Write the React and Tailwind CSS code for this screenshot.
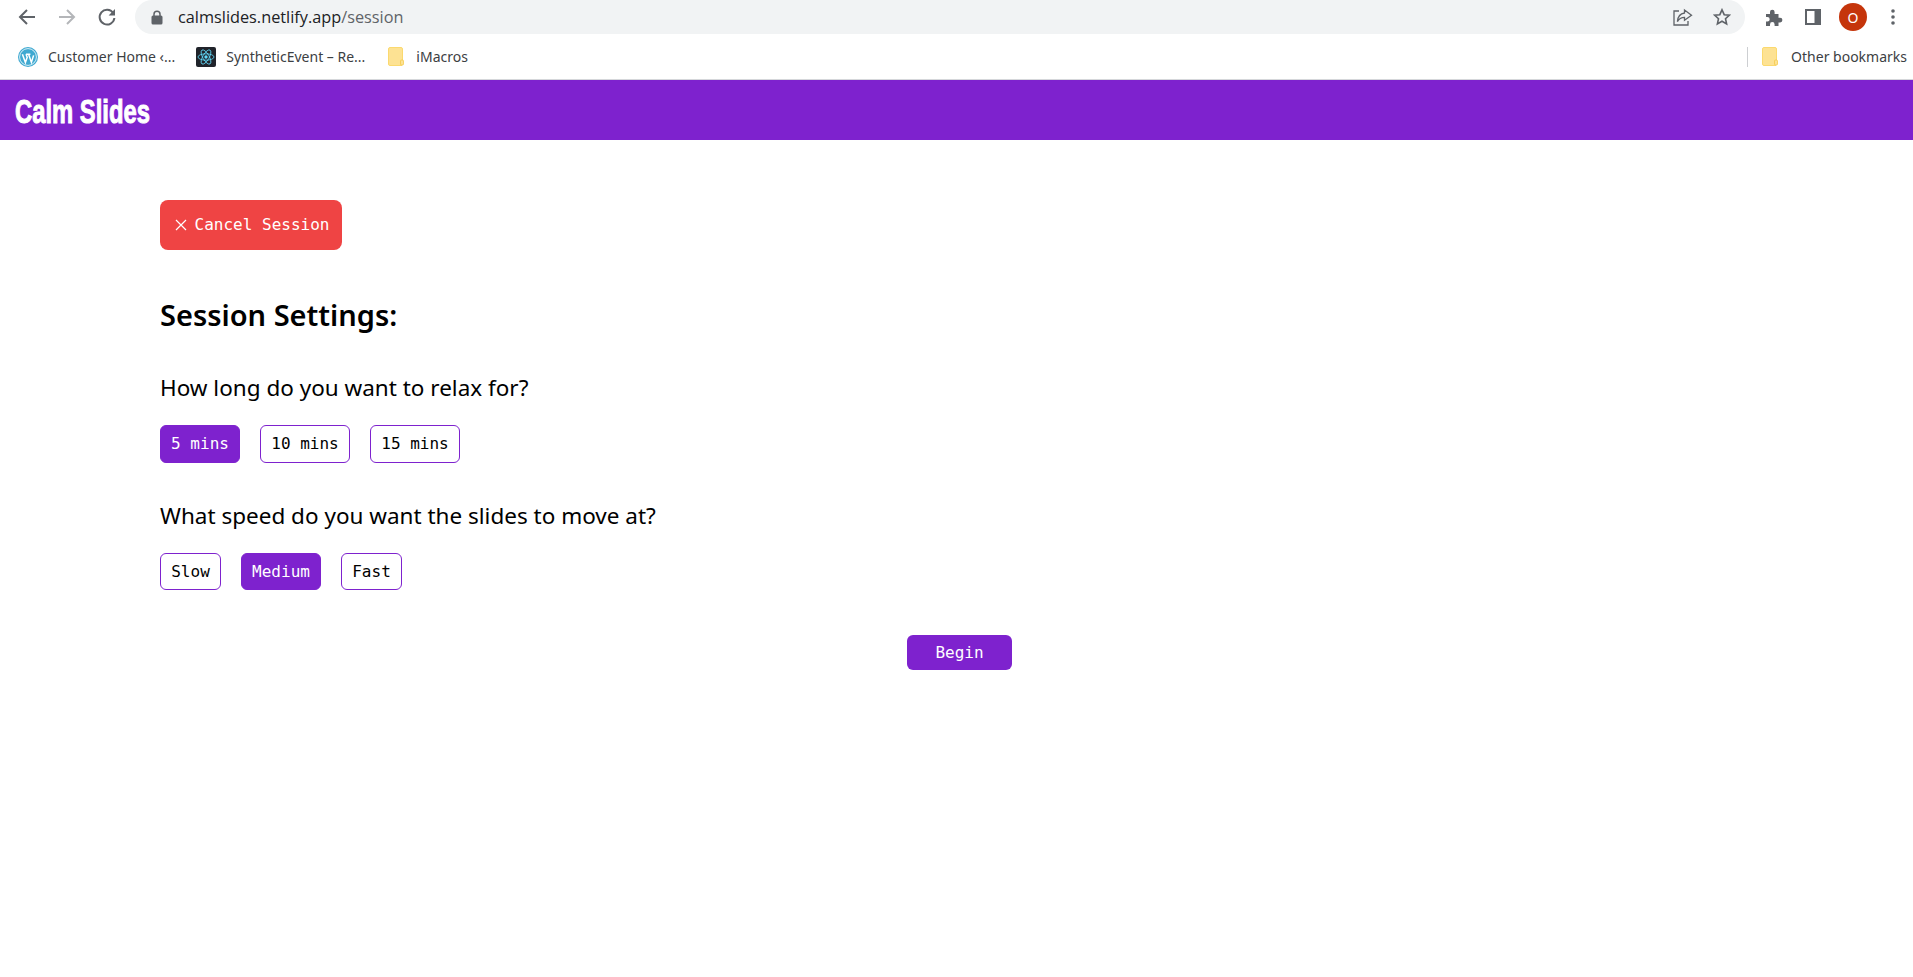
import { useState } from 'react';

const mono = "font-['DejaVu_Sans_Mono','Liberation_Mono',monospace]";

const Back = () => (
    <svg width="20" height="20" viewBox="0 0 20 20" fill="none" stroke="#5f6368" strokeWidth="2">
        <path d="M18 10H3M10 3l-7 7 7 7" />
    </svg>
);

const Forward = () => (
    <svg width="20" height="20" viewBox="0 0 20 20" fill="none" stroke="#b4b6b9" strokeWidth="2">
        <path d="M2 10h15M10 3l7 7-7 7" />
    </svg>
);

const Reload = () => (
    <svg width="20" height="20" viewBox="0 0 20 20" fill="none">
        <path d="M16.2 6A7.4 7.4 0 1 0 17.4 11" stroke="#5f6368" strokeWidth="2" />
        <path d="M18 2v6.4h-6.4z" fill="#5f6368" />
    </svg>
);

const Lock = () => (
    <svg width="12" height="15" viewBox="0 0 12 15">
        <path d="M3 6V4.2a3 3 0 0 1 6 0V6" fill="none" stroke="#5f6368" strokeWidth="1.5" />
        <rect x="0.5" y="5.5" width="11" height="9" rx="1.5" fill="#5f6368" />
    </svg>
);

const Share = () => (
    <svg width="20" height="18" viewBox="0 0 20 18" fill="none" stroke="#5f6368" strokeWidth="1.3">
        <path d="M6 3H1v14h14v-4" />
        <path d="M11.5 2l7 5.2-7 5V9.4C8 9.4 6 10.6 4.4 13.6 4.8 9 7 5.6 11.5 5z" />
    </svg>
);

const Star = () => (
    <svg width="18" height="18" viewBox="0 0 18 18" fill="none" stroke="#5f6368" strokeWidth="1.6">
        <path d="M9 1.8l2.2 4.9 5.2.5-3.9 3.5 1.1 5.2L9 13.2l-4.6 2.7 1.1-5.2L1.6 7.2l5.2-.5z" />
    </svg>
);

const Puzzle = () => (
    <svg width="18" height="18" viewBox="0 0 18 18" fill="#5f6368">
        <path d="M1 6h4V4a2.3 2.3 0 0 1 4.6 0v2h3.9v3.8h1.6a2.3 2.3 0 0 1 0 4.6h-1.6V18H9.6v-1.6a2.3 2.3 0 0 0-4.6 0V18H1v-4.4h1.4a2.3 2.3 0 0 0 0-4.6H1z" />
    </svg>
);

const Panel = () => (
    <svg width="18" height="18" viewBox="0 0 18 18">
        <rect x="1" y="1" width="16" height="16" fill="#5f6368" />
        <rect x="3" y="3" width="7.5" height="12" fill="#fff" />
    </svg>
);

const Dots = () => (
    <svg width="4" height="16" viewBox="0 0 4 16" fill="#5f6368">
        <circle cx="2" cy="2" r="1.8" />
        <circle cx="2" cy="8" r="1.8" />
        <circle cx="2" cy="14" r="1.8" />
    </svg>
);

const WpIcon = () => (
    <svg width="20" height="20" viewBox="0 0 20 20">
        <circle cx="10" cy="10" r="10" fill="#3fa9d1" />
        <circle cx="10" cy="10" r="8.4" fill="none" stroke="#fff" strokeWidth="0.8" />
        <path d="M4.4 7.2l3 8.2 1.8-5.2-1.2-3M8 7.2h4.4M10.6 7.2l2.8 8.2 2.2-7" fill="none" stroke="#fff" strokeWidth="1.5" />
    </svg>
);

const ReactIcon = () => (
    <svg width="20" height="20" viewBox="0 0 20 20">
        <rect width="20" height="20" rx="2" fill="#20232a" />
        <circle cx="10" cy="10" r="1.7" fill="#61dafb" />
        <g fill="none" stroke="#61dafb" strokeWidth="0.8">
            <ellipse cx="10" cy="10" rx="8" ry="3.2" />
            <ellipse cx="10" cy="10" rx="8" ry="3.2" transform="rotate(60 10 10)" />
            <ellipse cx="10" cy="10" rx="8" ry="3.2" transform="rotate(120 10 10)" />
        </g>
    </svg>
);

const Folder = () => (
    <svg width="16" height="19" viewBox="0 0 16 19">
        <rect x="0.5" y="0.5" width="14" height="18" rx="1.5" fill="#fde293" stroke="#fbd96f" />
        <rect x="12.5" y="13" width="3" height="5" rx="1" fill="#fde293" stroke="#f4c542" strokeWidth="0.7" />
    </svg>
);

const Bookmark = ({ icon, label, className }) => (
    <div className={`flex items-center ${className}`}>
        {icon}
        <span className="text-[14px] text-[#3c4043] whitespace-nowrap">{label}</span>
    </div>
);

const Choice = ({ label, active, onClick, width, height }) => (
    <button
        onClick={onClick}
        className={`${width} ${height} rounded-md border border-[#7e22ce] text-[16px] ${mono} ${active ? 'bg-[#7e22ce] text-white' : 'bg-white text-black'}`}
    >
        {label}
    </button>
);

const App = () => {
    const [mins, setMins] = useState('5 mins');
    const [speed, setSpeed] = useState('Medium');

    return (
        <div className="min-h-[977px] bg-white font-['Noto_Sans',sans-serif]">
            <div className="h-[34px] flex items-center pl-[17px] pr-[18px]">
                <div className="flex items-center gap-[20px] mr-[18px]">
                    <Back />
                    <Forward />
                    <Reload />
                </div>
                <div className="h-[34px] w-[1610px] rounded-full bg-[#f1f3f4] flex items-center pl-[16px] pr-[14px]">
                    <Lock />
                    <span className="ml-[15px] text-[16.3px] text-[#202124] font-['Open_Sans',sans-serif]">
                        calmslides.netlify.app<span className="text-[#5f6368]">/session</span>
                    </span>
                    <div className="ml-auto flex items-center gap-[20px]">
                        <Share />
                        <Star />
                    </div>
                </div>
                <div className="ml-auto flex items-center">
                    <Puzzle />
                    <div className="ml-[21px]"><Panel /></div>
                    <div className="ml-[17px] w-[28px] h-[28px] rounded-full bg-[#c5350b] text-white text-[14px] flex items-center justify-center">O</div>
                    <div className="ml-[24px]"><Dots /></div>
                </div>
            </div>

            <div className="h-[46px] flex items-center pl-[18px] pr-[6px] border-b border-[#d5d7da]">
                <Bookmark icon={<WpIcon />} label="Customer Home ‹..." className="gap-[10px] mr-[21px]" />
                <Bookmark icon={<ReactIcon />} label="SyntheticEvent – Re..." className="gap-[10px] mr-[23px]" />
                <Bookmark icon={<Folder />} label="iMacros" className="gap-[12px]" />
                <div className="ml-auto flex items-center">
                    <div className="w-px h-[20px] bg-[#cdcfd2] mr-[14px]" />
                    <Bookmark icon={<Folder />} label="Other bookmarks" className="gap-[13px]" />
                </div>
            </div>

            <header className="h-[60px] bg-[#7e22ce] flex items-center pl-[15px] pt-[2px]">
                <h1 className="text-[34px] leading-none font-bold text-white origin-left scale-x-[0.7] whitespace-nowrap [-webkit-text-stroke:1px_white] font-['Liberation_Sans',sans-serif]">Calm Slides</h1>
            </header>

            <main className="px-[160px] pt-[60px]">
                <button className={`w-[182px] h-[50px] rounded-lg bg-[#ef4444] text-white text-[16px] flex items-center justify-center gap-[8px] pl-[2px] ${mono}`}>
                    <svg width="12" height="12" viewBox="0 0 12 12" fill="none" stroke="#fff" strokeWidth="1.2">
                        <path d="M1 1l10 10M11 1L1 11" />
                    </svg>
                    Cancel Session
                </button>

                <h2 className="mt-[42px] text-[29px] leading-[45px] font-semibold text-black">Session Settings:</h2>

                <p className="mt-[34px] text-[22.5px] leading-[33px] text-black">How long do you want to relax for?</p>
                <div className="mt-[21px] flex gap-[20px]">
                    <Choice label="5 mins" width="w-[80px]" height="h-[38px]" active={mins === '5 mins'} onClick={() => setMins('5 mins')} />
                    <Choice label="10 mins" width="w-[90px]" height="h-[38px]" active={mins === '10 mins'} onClick={() => setMins('10 mins')} />
                    <Choice label="15 mins" width="w-[90px]" height="h-[38px]" active={mins === '15 mins'} onClick={() => setMins('15 mins')} />
                </div>

                <p className="mt-[36px] text-[22.5px] leading-[33px] text-black">What speed do you want the slides to move at?</p>
                <div className="mt-[21px] flex gap-[20px]">
                    <Choice label="Slow" width="w-[61px]" height="h-[37px]" active={speed === 'Slow'} onClick={() => setSpeed('Slow')} />
                    <Choice label="Medium" width="w-[80px]" height="h-[37px]" active={speed === 'Medium'} onClick={() => setSpeed('Medium')} />
                    <Choice label="Fast" width="w-[61px]" height="h-[37px]" active={speed === 'Fast'} onClick={() => setSpeed('Fast')} />
                </div>

                <div className="mt-[45px] flex justify-center pl-[6px]">
                    <button className={`w-[105px] h-[35px] rounded-md bg-[#7e22ce] text-white text-[16px] ${mono}`}>Begin</button>
                </div>
            </main>
        </div>
    );
};

export default App;
